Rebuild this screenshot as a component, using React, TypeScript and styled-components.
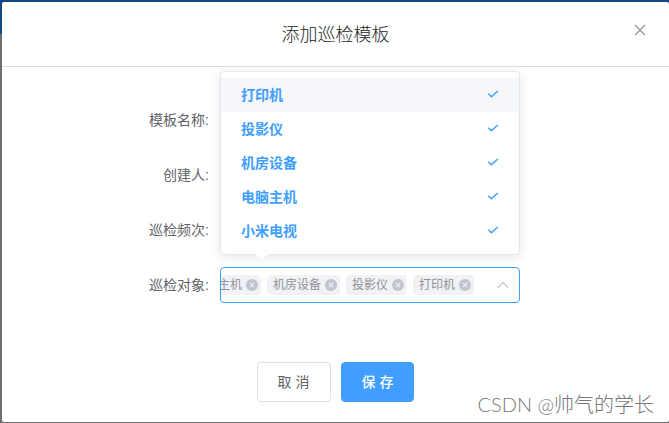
import React, { useState } from "react";
import styled, { createGlobalStyle } from "styled-components";

const OPTIONS = ["打印机", "投影仪", "机房设备", "电脑主机", "小米电视"];
const MAX_TAGS = 4;

const GlobalStyle = createGlobalStyle`
  * { box-sizing: border-box; }
  html, body, #root { height: 100%; }
  body {
    margin: 0;
    overflow: hidden;
    font-family: "Liberation Sans", "Noto Sans CJK SC", sans-serif;
    font-size: 14px;
    color: #606266;
  }
  button, input { font: inherit; }
`;

const Page = styled.div`
  position: relative;
  height: 100%;
  padding: 2px 0 1px 2px;
  background: linear-gradient(#114a84 34px, #6e6f71 34px);
`;

const Dialog = styled.section`
  display: flex;
  flex-direction: column;
  height: 100%;
  background: #fff;
  border-radius: 2px;
`;

const Header = styled.header`
  position: relative;
  flex: none;
  height: 65px;
  border-bottom: 1px solid #ddd;
  text-align: center;
`;

const Title = styled.h1`
  margin: 0;
  font-size: 18px;
  font-weight: 300;
  line-height: 66px;
  color: #202122;
`;

const CloseButton = styled.button`
  position: absolute;
  top: 20px;
  right: 21px;
  display: grid;
  place-items: center;
  width: 16px;
  height: 16px;
  padding: 0;
  border: 0;
  background: none;
  color: #909399;
`;

const Form = styled.form`
  flex: 1;
  display: flex;
  flex-direction: column;
`;

const Fields = styled.div`
  flex: 1;
  display: grid;
  grid-template-columns: max-content minmax(0, 300px);
  grid-auto-rows: 36px;
  justify-content: center;
  align-items: center;
  gap: 19px 11px;
  padding: 35px 2px 0 0;
`;

const Label = styled.label`
  text-align: right;
  line-height: 36px;
`;

const TextInput = styled.input`
  width: 100%;
  height: 36px;
  padding: 0 15px;
  border: 1px solid #dcdfe6;
  border-radius: 4px;
  outline: none;
`;

const Select = styled.div`
  position: relative;
  display: flex;
  align-items: center;
  height: 36px;
  border: 1px solid #409eff;
  border-radius: 4px;
  background: #fff;
`;

const Tags = styled.div`
  flex: 1;
  display: flex;
  justify-content: flex-end;
  gap: 6px;
  overflow: hidden;
`;

const Tag = styled.span`
  flex: none;
  display: flex;
  align-items: center;
  gap: 4px;
  height: 20px;
  padding: 0 3px 0 6px;
  border-radius: 4px;
  background: #f0f2f5;
  color: #909399;
  font-size: 12px;
  line-height: 20px;
`;

const TagRemove = styled.button`
  display: grid;
  width: 12px;
  height: 12px;
  padding: 0;
  border: 0;
  background: none;
`;

const Toggle = styled.button`
  flex: none;
  display: grid;
  place-items: center;
  width: 45px;
  height: 34px;
  padding: 0 0 0 13px;
  border: 0;
  background: none;
  color: #c0c4cc;
`;

const Dropdown = styled.ul`
  position: absolute;
  z-index: 2;
  left: -1px;
  right: -1px;
  bottom: 47px;
  margin: 0;
  padding: 6px 0;
  list-style: none;
  border: 1px solid #e4e7ed;
  border-radius: 4px;
  background: #fff;
  box-shadow: 0 2px 12px rgba(0, 0, 0, 0.1);

  &::after {
    content: "";
    position: absolute;
    top: 100%;
    left: 35px;
    border: 6px solid transparent;
    border-top-color: #fff;
    border-bottom: 0;
  }
`;

const Option = styled.li<{ $active: boolean; $selected: boolean }>`
  display: flex;
  align-items: center;
  justify-content: space-between;
  height: 34px;
  padding: 0 20px 2px;
  background: ${(p) => (p.$active ? "#f5f7fa" : "#fff")};
  color: ${(p) => (p.$selected ? "#409eff" : "#606266")};
  font-weight: ${(p) => (p.$selected ? 700 : 400)};
  cursor: pointer;
`;

const Footer = styled.footer`
  display: flex;
  justify-content: center;
  gap: 10px;
  padding-bottom: 20px;
`;

const Button = styled.button<{ $primary?: boolean }>`
  height: 40px;
  padding: 0 20px 2px;
  border: 1px solid ${(p) => (p.$primary ? "#409eff" : "#dcdfe6")};
  border-radius: 4px;
  background: ${(p) => (p.$primary ? "#409eff" : "#fff")};
  color: ${(p) => (p.$primary ? "#fff" : "#606266")};
  font-weight: ${(p) => (p.$primary ? 500 : 400)};
`;

const Watermark = styled.div`
  position: absolute;
  right: 15px;
  bottom: 5px;
  font-family: "Lato", "Noto Sans CJK SC", sans-serif;
  font-size: 20px;
  font-weight: 300;
  line-height: 28px;
  color: #777;
  text-shadow: 1px 1px 1px #fff;
  pointer-events: none;
`;

const CrossIcon = () => (
  <svg width="12" height="12" viewBox="0 0 12 12" fill="none" stroke="currentColor" strokeWidth="1.2" aria-hidden="true">
    <path d="M1 1l10 10M11 1L1 11" />
  </svg>
);

const CheckIcon = () => (
  <svg width="12" height="12" viewBox="0 0 12 12" fill="none" stroke="currentColor" strokeWidth="1.5" aria-hidden="true">
    <path d="M1.3 5.8l3.1 3L10.8 3" />
  </svg>
);

const CircleCloseIcon = () => (
  <svg width="12" height="12" viewBox="0 0 12 12" aria-hidden="true">
    <circle cx="6" cy="6" r="6" fill="#c0c4cc" />
    <path d="M3.9 3.9l4.2 4.2M8.1 3.9L3.9 8.1" stroke="#f0f2f5" strokeWidth="1.3" />
  </svg>
);

const ChevronUpIcon = () => (
  <svg width="12" height="8" viewBox="0 0 12 8" fill="none" stroke="currentColor" strokeWidth="1.2" aria-hidden="true">
    <path d="M.8 6.7L6 1.5l5.2 5.2" />
  </svg>
);

export default function App() {
  const [open, setOpen] = useState(true);
  const [active, setActive] = useState(OPTIONS[0]);
  const [selected, setSelected] = useState([...OPTIONS].reverse());

  const toggle = (name: string) =>
    setSelected((list) => (list.includes(name) ? list.filter((item) => item !== name) : [...list, name]));

  return (
    <>
      <GlobalStyle />
      <Page>
        <Dialog role="dialog" aria-labelledby="dialog-title">
          <Header>
            <Title id="dialog-title">添加巡检模板</Title>
            <CloseButton type="button" aria-label="关闭">
              <CrossIcon />
            </CloseButton>
          </Header>
          <Form onSubmit={(event) => event.preventDefault()}>
            <Fields>
              <Label htmlFor="name">模板名称:</Label>
              <TextInput id="name" />
              <Label htmlFor="creator">创建人:</Label>
              <TextInput id="creator" />
              <Label htmlFor="frequency">巡检频次:</Label>
              <TextInput id="frequency" />
              <Label htmlFor="targets">巡检对象:</Label>
              <Select>
                <Tags>
                  {selected.slice(-MAX_TAGS).map((name) => (
                    <Tag key={name}>
                      {name}
                      <TagRemove type="button" aria-label={`移除${name}`} onClick={() => toggle(name)}>
                        <CircleCloseIcon />
                      </TagRemove>
                    </Tag>
                  ))}
                </Tags>
                <Toggle
                  id="targets"
                  type="button"
                  aria-haspopup="listbox"
                  aria-expanded={open}
                  onClick={() => setOpen(!open)}
                >
                  <ChevronUpIcon />
                </Toggle>
                {open && (
                  <Dropdown role="listbox" aria-multiselectable="true">
                    {OPTIONS.map((name) => (
                      <Option
                        key={name}
                        role="option"
                        aria-selected={selected.includes(name)}
                        $active={active === name}
                        $selected={selected.includes(name)}
                        onMouseEnter={() => setActive(name)}
                        onClick={() => toggle(name)}
                      >
                        {name}
                        {selected.includes(name) && <CheckIcon />}
                      </Option>
                    ))}
                  </Dropdown>
                )}
              </Select>
            </Fields>
            <Footer>
              <Button type="button">取 消</Button>
              <Button type="submit" $primary>
                保 存
              </Button>
            </Footer>
          </Form>
        </Dialog>
        <Watermark>CSDN @帅气的学长</Watermark>
      </Page>
    </>
  );
}
